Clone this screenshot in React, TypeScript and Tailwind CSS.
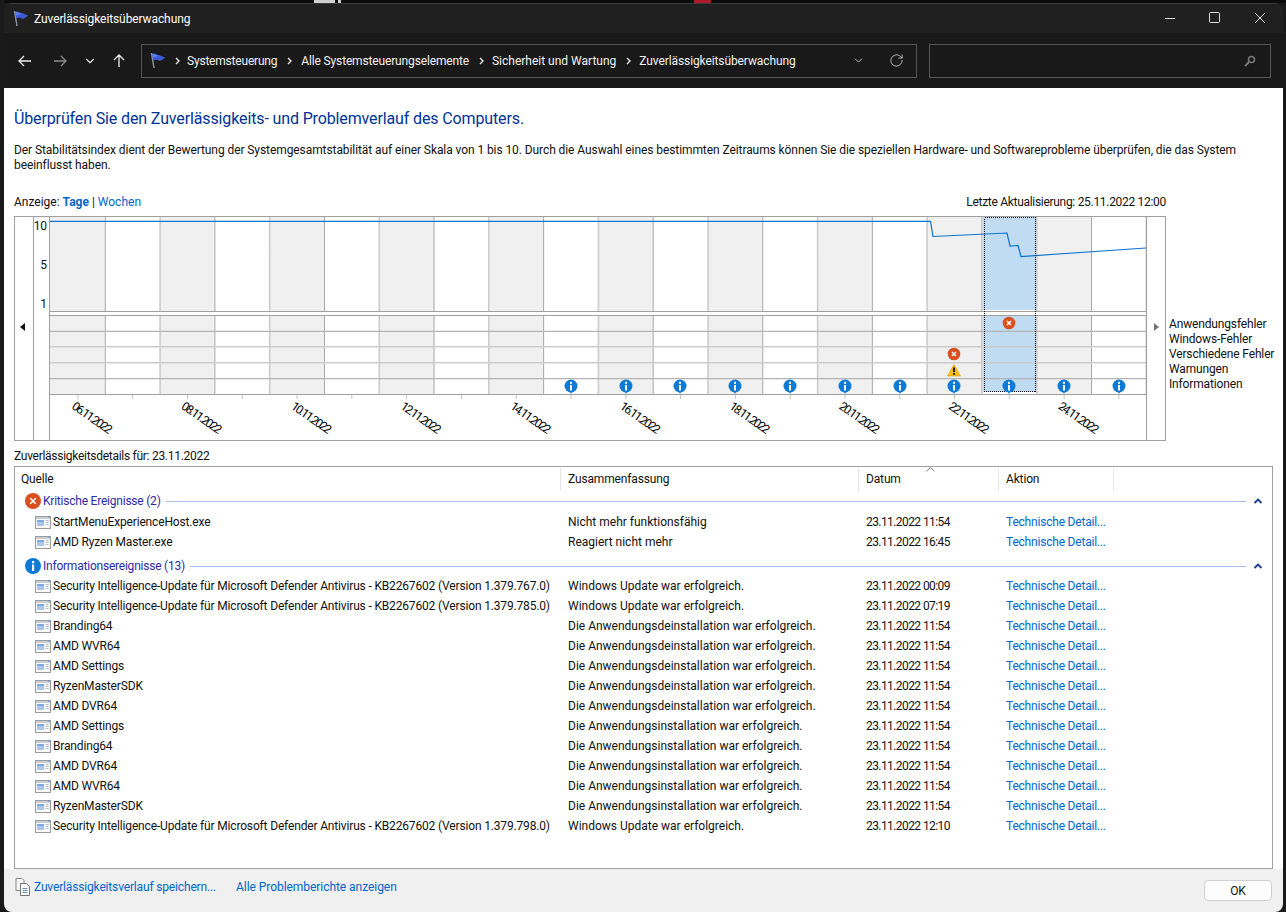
import { ChevronDown, RotateCw } from 'lucide-react';

const rows1 = [
  ['StartMenuExperienceHost.exe', 'Nicht mehr funktionsfähig', '23.11.2022 11:54'],
  ['AMD Ryzen Master.exe', 'Reagiert nicht mehr', '23.11.2022 16:45'],
];
const inst = 'Die Anwendungsinstallation war erfolgreich.';
const deinst = 'Die Anwendungsdeinstallation war erfolgreich.';
const upd = 'Windows Update war erfolgreich.';
const sec = 'Security Intelligence-Update für Microsoft Defender Antivirus - KB2267602 (Version ';
const rows2 = [
  [sec + '1.379.767.0)', upd, '23.11.2022 00:09'],
  [sec + '1.379.785.0)', upd, '23.11.2022 07:19'],
  ['Branding64', deinst, '23.11.2022 11:54'],
  ['AMD WVR64', deinst, '23.11.2022 11:54'],
  ['AMD Settings', deinst, '23.11.2022 11:54'],
  ['RyzenMasterSDK', deinst, '23.11.2022 11:54'],
  ['AMD DVR64', deinst, '23.11.2022 11:54'],
  ['AMD Settings', inst, '23.11.2022 11:54'],
  ['Branding64', inst, '23.11.2022 11:54'],
  ['AMD DVR64', inst, '23.11.2022 11:54'],
  ['AMD WVR64', inst, '23.11.2022 11:54'],
  ['RyzenMasterSDK', inst, '23.11.2022 11:54'],
  [sec + '1.379.798.0)', upd, '23.11.2022 12:10'],
];

const colLines = Array.from({ length: 20 }, (_, i) => 105.3 + i * 54.79);
const dates = ['06', '08', '10', '12', '14', '16', '18', '20', '22', '24'];
const infoCols = [571, 626, 680, 735, 790, 845, 900, 954, 1009, 1064, 1119];

function Flag() {
  return (
    <svg width="17" height="17" viewBox="0 0 17 17" className="shrink-0">
      <path d="M2.5 1 L5 16" stroke="#8f97a6" strokeWidth="1.4" fill="none" />
      <path d="M3 2 C6 0.5 7.5 3 10 3 L16 5.5 C14 7.5 12.5 8 11 9 C9 8 6.5 7 4.3 8.5 Z" fill="#3b5bd9" />
      <path d="M3 2 C5 1.5 7 3 9 3.5 L6 5 L3.6 5.5 Z" fill="#5f80ea" />
    </svg>
  );
}

function Crumb() {
  return (
    <svg width="5" height="8" viewBox="0 0 5 8" className="shrink-0 mx-[10px]">
      <path d="M1 1l3 3-3 3" stroke="#e8e8e8" strokeWidth="1.4" fill="none" />
    </svg>
  );
}

function AppIcon() {
  return (
    <svg width="16" height="14" viewBox="0 0 16 14" className="shrink-0">
      <rect x="0.5" y="1.5" width="15" height="12" fill="#fafafa" stroke="#9a9a9a" />
      <rect x="1" y="2" width="14" height="2" fill="#c9ced4" />
      <rect x="2" y="5" width="7" height="2" fill="#7fa8dc" />
      <rect x="2" y="7" width="7" height="4" fill="#a9c6ea" />
      <path d="M10.5 5.5h3M10.5 7.5h3M10.5 9.5h3" stroke="#b5bfcc" />
      <path d="M14 1v2" stroke="#5b8fd0" />
    </svg>
  );
}

function GroupError() {
  return (
    <svg width="16" height="16" viewBox="0 0 16 16" className="shrink-0">
      <circle cx="8" cy="8" r="8" fill="#d9501e" />
      <path d="M5.3 5.3l5.4 5.4M10.7 5.3l-5.4 5.4" stroke="#fff" strokeWidth="1.6" />
    </svg>
  );
}

function GroupInfo() {
  return (
    <svg width="16" height="16" viewBox="0 0 16 16" className="shrink-0">
      <circle cx="8" cy="8" r="8" fill="#0f7ad6" />
      <rect x="7" y="6.5" width="2.2" height="6.5" fill="#fff" />
      <rect x="7" y="3" width="2.2" height="2.2" fill="#fff" />
    </svg>
  );
}

function Collapse() {
  return (
    <svg width="10" height="6" viewBox="0 0 10 6" className="shrink-0">
      <path d="M1.5 5L5 1.5L8.5 5" stroke="#1a3f8f" strokeWidth="1.8" fill="none" />
    </svg>
  );
}

function Chart() {
  return (
    <svg width="1152" height="225" viewBox="14 216 1152 225" className="shrink-0">
      {colLines.map((x, i) =>
        i % 2 === 1 && i < 19 ? (
          <g key={x}>
            <rect x={x} y="217" width="54.79" height="94" fill="#f0f0f0" />
            <rect x={x} y="316" width="54.79" height="78" fill="#f0f0f0" />
          </g>
        ) : null
      )}
      <rect x="49" y="217" width="56" height="94" fill="#f0f0f0" />
      <rect x="49" y="316" width="56" height="78" fill="#f0f0f0" />
      <rect x="983" y="217" width="54" height="93" fill="#c0dcf3" />
      <rect x="983" y="316" width="54" height="76" fill="#c0dcf3" />

      {colLines.map((x, i) => (
        <g key={x} stroke={i % 2 === 1 ? '#cccccc' : '#a8a8a8'} strokeWidth={i % 2 === 1 ? 1.6 : 1}>
          <line x1={x} x2={x} y1="217" y2="311" />
          <line x1={x} x2={x} y1="316" y2="394" />
        </g>
      ))}
      {[331.3, 346.8, 362.8, 378.7].map((y, i) => (
        <line key={y} x1="49" x2="1146" y1={y} y2={y} stroke={i === 1 || i === 2 ? '#cccccc' : '#b4b4b4'} strokeWidth={i === 1 || i === 2 ? 1.6 : 1.2} />
      ))}
      <g stroke="#a0a0a0" fill="none">
        <rect x="14.5" y="216.5" width="1151" height="224" />
        <line x1="33.5" x2="33.5" y1="216" y2="440" />
        <line x1="49.5" x2="49.5" y1="216" y2="440" />
        <line x1="1146.5" x2="1146.5" y1="216" y2="440" />
        <line x1="49" x2="1146" y1="311.5" y2="311.5" />
        <line x1="49" x2="1146" y1="315.5" y2="315.5" />
        <line x1="49" x2="1146" y1="394.5" y2="394.5" />
      </g>
      {colLines.map((x) => (
        <line key={x} x1={x - 27.4} x2={x - 27.4} y1="395" y2="399" stroke="#c4c4c4" />
      ))}

      <polyline
        points="50,221.4 930.5,221.4 933,236.5 1007,233 1010,246 1018,245.5 1021,256.5 1146,248"
        fill="none"
        stroke="#0a74cf"
        strokeWidth="1.2"
      />
      <rect x="984.5" y="217.5" width="51" height="174" fill="none" stroke="#000" strokeDasharray="1 1" shapeRendering="crispEdges" />

      <path d="M20 327l5-4v8z" fill="#111" />
      <path d="M1154 323l5 4-5 4z" fill="#777" />

      <g fontSize="12" fill="#111" textAnchor="end">
        <text x="47" y="230">10</text>
        <text x="47" y="269">5</text>
        <text x="47" y="308">1</text>
      </g>

      {dates.map((d, i) => (
        <text
          key={d}
          x="0"
          y="0"
          fontSize="12"
          fill="#000"
          textLength={46}
          lengthAdjust="spacing"
          transform={`translate(${71 + i * 109.6} 408) rotate(35)`}
        >
          {d}.11.2022
        </text>
      ))}

      {infoCols.map((x) => (
        <g key={x}>
          <path d={`M${x - 1} 392h2l-1 2z`} fill="#0f7ad6" />
          <circle cx={x} cy="386" r="6.5" fill="#0f7ad6" />
          <rect x={x - 1} y="385" width="2" height="5.5" fill="#fff" />
          <rect x={x - 1} y="381.8" width="2" height="2" fill="#fff" />
        </g>
      ))}
      {[[1009, 323], [954, 354]].map(([x, y]) => (
        <g key={x}>
          <circle cx={x} cy={y} r="6.3" fill="#d9501e" />
          <path d={`M${x - 2} ${y - 2}l4 4M${x + 2} ${y - 2}l-4 4`} stroke="#fff" strokeWidth="1.5" />
        </g>
      ))}
      <path d="M954 364.5 L960.5 376 H947.5 Z" fill="#f9bd0e" stroke="#dca000" strokeWidth="0.6" />
      <rect x="953" y="367.5" width="2" height="4.5" fill="#222" />
      <rect x="953" y="373" width="2" height="1.8" fill="#222" />
    </svg>
  );
}

function Row({ r }: { r: string[] }) {
  return (
    <div className="grid grid-cols-[546px_298px_140px_1fr] h-[20px] items-center">
      <div className="flex items-center gap-[2px] pl-[20px] tracking-[-0.16px]">
        <AppIcon />
        <span className="whitespace-nowrap">{r[0]}</span>
      </div>
      <div className="pl-[7px] whitespace-nowrap tracking-normal">{r[1]}</div>
      <div className="pl-[7px] tracking-[-0.58px]">{r[2]}</div>
      <div className="pl-[7px] text-[#0066cc] tracking-[-0.2px]">Technische Detail...</div>
    </div>
  );
}

function Group({ icon, title, className }: { icon: React.ReactNode; title: string; className?: string }) {
  return (
    <div className={`flex items-center h-[20px] pl-[10px] pr-[9px] ${className ?? ''}`}>
      {icon}
      <span className="ml-[2px] text-[#2a2aa8] whitespace-nowrap tracking-[-0.22px]">{title}</span>
      <div className="flex-1 h-px bg-[#a9bde6] ml-[5px] mr-[7px]" />
      <Collapse />
    </div>
  );
}

export default function App() {
  return (
    <div className="relative w-[1286px] h-[912px] bg-[#1a1a1a] pt-[3px] pl-[4px] pr-[3px] flex font-['Roboto',sans-serif] text-[12px] tracking-[-0.1px] text-[#111] overflow-hidden">
      <div className="absolute left-[4px] top-0 w-[1282px] h-[3px] bg-[#0b0b0b]" />
      <div className="absolute left-[314px] top-0 w-[21px] h-[3px] bg-[#cfcfcf]" />
      <div className="absolute left-[338px] top-0 w-[3px] h-[3px] bg-[#cfcfcf]" />
      <div className="absolute left-[694px] top-0 w-[17px] h-[3px] bg-[#b0182c]" />
      <div className="relative flex-1 flex flex-col rounded-lg overflow-hidden">
        <div className="h-[30px] bg-[#202020] flex items-center text-white border-t border-[#3a3a3a] shrink-0">
          <div className="ml-[8px]">
            <Flag />
          </div>
          <span className="ml-[5px]">Zuverlässigkeitsüberwachung</span>
          <div className="ml-auto flex items-center mb-[2px]">
            <svg width="12" height="12" viewBox="0 0 12 12" className="mr-[33px]">
              <path d="M1 6.5h10" stroke="#ddd" />
            </svg>
            <svg width="11" height="11" viewBox="0 0 11 11" className="mr-[34px]">
              <rect x="0.5" y="0.5" width="10" height="10" rx="1" fill="none" stroke="#ddd" />
            </svg>
            <svg width="12" height="12" viewBox="0 0 12 12" className="mr-[17px]">
              <path d="M1 1l10 10M11 1L1 11" stroke="#ddd" />
            </svg>
          </div>
        </div>

        <div className="h-[55px] bg-[#191919] flex items-center text-[#f0f0f0] shrink-0">
          <svg width="14" height="12" viewBox="0 0 14 12" className="ml-[14px]">
            <path d="M13 6H1.5M6 1L1 6l5 5" stroke="#eee" strokeWidth="1.3" fill="none" />
          </svg>
          <svg width="14" height="12" viewBox="0 0 14 12" className="ml-[21px]">
            <path d="M1 6h11.5M8 1l5 5-5 5" stroke="#8a8a8a" strokeWidth="1.3" fill="none" />
          </svg>
          <ChevronDown size={14} strokeWidth={2} color="#e0e0e0" className="ml-[16px]" />
          <svg width="12" height="14" viewBox="0 0 12 14" className="ml-[16px]">
            <path d="M6 13V1.5M1 6l5-5 5 5" stroke="#eee" strokeWidth="1.3" fill="none" />
          </svg>
          <div className="ml-[16px] w-[776px] h-[34px] border border-[#555] flex items-center pl-[7px] pr-[12px]">
            <Flag />
            <div className="ml-[-1px]">
              <Crumb />
            </div>
            <span className="tracking-[-0.2px] ml-[-3px]">Systemsteuerung</span>
            <Crumb />
            <span className="tracking-[-0.15px] ml-[-1px]">Alle Systemsteuerungselemente</span>
            <Crumb />
            <span className="ml-[-2px] tracking-normal">Sicherheit und Wartung</span>
            <Crumb />
            <span className="ml-[-2px]">Zuverlässigkeitsüberwachung</span>
            <ChevronDown size={13} strokeWidth={1.5} color="#dddddd" className="ml-auto mr-[24px]" />
            <RotateCw size={15} strokeWidth={1.4} color="#cccccc" />
          </div>
          <div className="ml-[12px] w-[342px] h-[34px] border border-[#555] flex items-center justify-end pr-[14px]">
            <svg width="12" height="12" viewBox="0 0 12 12">
              <circle cx="7.5" cy="4.5" r="3" fill="none" stroke="#777" strokeWidth="1.6" />
              <path d="M5.3 6.7L1 11" stroke="#777" strokeWidth="2" />
            </svg>
          </div>
        </div>

        <div className="flex-1 bg-white px-[10px] pt-[21px] flex flex-col min-h-0">
          <h1 className="text-[16px] leading-[20px] text-[#003399] font-normal tracking-[-0.13px]">
            Überprüfen Sie den Zuverlässigkeits- und Problemverlauf des Computers.
          </h1>
          <p className="mt-[14px] leading-[15px] tracking-[-0.08px]">
            Der Stabilitätsindex dient der Bewertung der Systemgesamtstabilität auf einer Skala von 1 bis 10. Durch die Auswahl eines bestimmten Zeitraums können Sie die speziellen Hardware- und Softwareprobleme überprüfen, die das System
            <br />
            beeinflusst haben.
          </p>
          <div className="mt-[22px] w-[1152px] flex justify-between leading-[15px]">
            <div className="tracking-normal">
              Anzeige: <span className="font-bold text-[#0066cc]">Tage</span> | <span className="text-[#0066cc]">Wochen</span>
            </div>
            <div className="tracking-[-0.3px]">Letzte Aktualisierung: 25.11.2022 12:00</div>
          </div>
          <div className="mt-[6px] flex">
            <Chart />
            <div className="ml-[3px] mt-[101px] leading-[15px] whitespace-nowrap tracking-[-0.15px]">
              <div>Anwendungsfehler</div>
              <div>Windows-Fehler</div>
              <div>Verschiedene Fehler</div>
              <div>Warnungen</div>
              <div>Informationen</div>
            </div>
          </div>
          <div className="mt-[8px] leading-[15px] tracking-[-0.28px]">Zuverlässigkeitsdetails für: 23.11.2022</div>
          <div className="mt-[2px] flex-1 border border-[#a0a0a0] min-h-0">
            <div className="relative grid grid-cols-[546px_298px_140px_115px] h-[24px] items-center tracking-[-0.15px]">
              <div className="pl-[6px] h-[23px] flex items-center border-r border-[#e5e5e5]">Quelle</div>
              <div className="pl-[7px] h-[23px] flex items-center border-r border-[#e5e5e5]">Zusammenfassung</div>
              <div className="pl-[7px] h-[23px] flex items-center border-r border-[#e5e5e5]">Datum</div>
              <div className="pl-[7px] h-[23px] flex items-center border-r border-[#e5e5e5]">Aktion</div>
              <svg width="9" height="5" viewBox="0 0 9 5" className="absolute left-[911px] top-0">
                <path d="M0.5 4.5L4.5 0.5L8.5 4.5" stroke="#888" fill="none" />
              </svg>
            </div>
            <Group icon={<GroupError />} title="Kritische Ereignisse (2)" className="mb-px" />
            {rows1.map((r) => (
              <Row key={r[0]} r={r} />
            ))}
            <Group icon={<GroupInfo />} title="Informationsereignisse (13)" className="mt-[4px]" />
            {rows2.map((r, i) => (
              <Row key={i} r={r} />
            ))}
          </div>
        </div>

        <div className="h-[43px] bg-[#f0f0f0] flex items-center pl-[11px] pr-[11px] shrink-0">
          <div className="flex items-center mb-[7px]">
            <svg width="15" height="18" viewBox="0 0 15 18">
              <path d="M1 .5h6l2 2v10H1z" fill="#f6f6f6" stroke="#888" />
              <path d="M5.5 5.5h6l3 3v9h-9z" fill="#fff" stroke="#777" />
              <path d="M7.5 10.5h5M7.5 12.5h5M7.5 14.5h5" stroke="#6f8fb5" />
            </svg>
            <span className="ml-[4px] text-[#0066cc] tracking-[-0.16px]">Zuverlässigkeitsverlauf speichern...</span>
            <span className="ml-[20px] text-[#0066cc] tracking-[-0.05px]">Alle Problemberichte anzeigen</span>
          </div>
          <div className="ml-auto w-[68px] h-[21px] bg-[#fdfdfd] border border-[#d0d0d0] rounded-[4px] flex items-center justify-center">
            OK
          </div>
        </div>
      </div>
    </div>
  );
}
